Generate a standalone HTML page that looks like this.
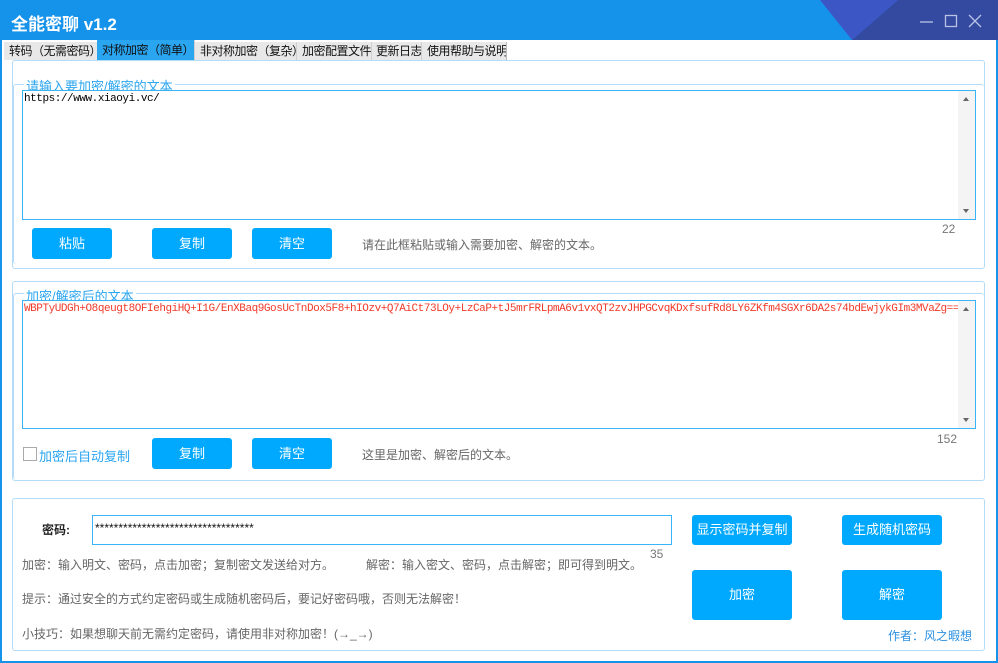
<!DOCTYPE html>
<html><head><meta charset="utf-8"><style>
*{margin:0;padding:0;box-sizing:border-box}
body{width:998px;height:663px;overflow:hidden;background:#fff;font-family:"Liberation Sans","Noto Sans CJK SC",sans-serif;position:relative}
.a{position:absolute;white-space:nowrap}
.title{left:0;top:0;width:998px;height:40px;background:#1592ea;overflow:hidden}
.title .t{left:11px;top:10px;color:#fff;font-size:17px;font-weight:bold}
.frame{left:0;top:40px;width:998px;height:623px;border:2px solid #1592ea;border-top:none}
.tabs{left:2px;top:40px;width:994px;height:20px;background:#fff}
.tab{position:absolute;top:2px;height:18px;background:#e8e8e8;font-size:12px;color:#111;line-height:18px;padding-left:5px;border-right:1px solid #d0d0d0;white-space:nowrap;overflow:hidden;letter-spacing:-0.5px}
.tab.sel{background:#2aa5f0;top:0;height:20px;line-height:21px}
.panel{border:1px solid #b4dcf8;border-radius:3px}
.grp{border:1px solid #b4dcf8;border-radius:3px}
.legend{background:#fff;color:#2aa5f0;font-size:13px;padding:0 2px}
.ta{border:1px solid #3ab4f5;background:#fff;overflow:hidden}
.sb{position:absolute;right:0;top:0;width:17px;bottom:0;background:#f4f4f4}
.btn{position:absolute;background:#00a8fe;color:#fff;font-size:13px;text-align:center;border-radius:3px}
.hint{color:#666;font-size:12px}
.mono{font-family:"Liberation Mono","DejaVu Sans Mono",monospace;font-size:11px;letter-spacing:-0.45px}
</style></head><body>
<div class="a title">
<svg class="a" style="left:0;top:0" width="998" height="40"><polygon points="820,0 898,0 852,40" fill="#3d56c6"/><polygon points="898,0 998,0 998,40 852,40" fill="#3449a0"/>
<line x1="920" y1="22" x2="933" y2="22" stroke="#b9c3e6" stroke-width="1.3"/>
<rect x="945.5" y="15.5" width="11" height="11" fill="none" stroke="#b9c3e6" stroke-width="1.3"/>
<path d="M969 15 L981 27 M981 15 L969 27" stroke="#b9c3e6" stroke-width="1.3"/></svg>
<div class="a t">全能密聊 v1.2</div>
</div>
<div class="a frame"></div>
<div class="a tabs">
<div class="tab" style="left:2px;width:94px">转码（无需密码）</div>
<div class="tab sel" style="left:95px;width:98px">对称加密（简单）</div>
<div class="tab" style="left:193px;width:102px">非对称加密（复杂）</div>
<div class="tab" style="left:295px;width:75px">加密配置文件</div>
<div class="tab" style="left:370px;width:50px;padding-left:4px">更新日志</div>
<div class="tab" style="left:420px;width:85px;border-right:1px solid #bbb">使用帮助与说明</div>
</div>
<!-- panel 1 -->
<div class="a panel" style="left:12px;top:60px;width:973px;height:209px"></div>
<div class="a grp" style="left:13px;top:84px;width:971px;height:180px;border-bottom:none;border-right:none"></div>
<div class="a legend" style="left:24px;top:76px">请输入要加密/解密的文本</div>
<div class="a ta" style="left:22px;top:90px;width:954px;height:130px">
<div class="a mono" style="left:1px;top:2px">https://www.xiaoyi.vc/</div>
<div class="sb"><div class="a" style="left:5px;top:6px;width:0;height:0;border:3.5px solid transparent;border-bottom:4px solid #666;border-top:none"></div><div class="a" style="left:5px;bottom:6px;width:0;height:0;border:3.5px solid transparent;border-top:4px solid #666;border-bottom:none"></div></div>
</div>
<div class="a hint" style="left:942px;top:222px;font-size:12px;color:#777">22</div>
<div class="btn" style="left:32px;top:228px;width:80px;height:31px;line-height:31px">粘贴</div>
<div class="btn" style="left:152px;top:228px;width:80px;height:31px;line-height:31px">复制</div>
<div class="btn" style="left:252px;top:228px;width:80px;height:31px;line-height:31px">清空</div>
<div class="a hint" style="left:362px;top:236px">请在此框粘贴或输入需要加密、解密的文本。</div>
<!-- panel 2 -->
<div class="a panel" style="left:12px;top:281px;width:973px;height:200px"></div>
<div class="a grp" style="left:13px;top:293px;width:971px;height:186px;border-bottom:none;border-right:none"></div>
<div class="a legend" style="left:24px;top:286px">加密/解密后的文本</div>
<div class="a ta" style="left:22px;top:300px;width:954px;height:129px">
<div class="a mono" style="left:1px;top:2px;color:#f03a2a">WBPTyUDGh+O8qeugt8OFIehgiHQ+I1G/EnXBaq9GosUcTnDox5F8+hIOzv+Q7AiCt73LOy+LzCaP+tJ5mrFRLpmA6v1vxQT2zvJHPGCvqKDxfsufRd8LY6ZKfm4SGXr6DA2s74bdEwjykGIm3MVaZg==</div>
<div class="sb"><div class="a" style="left:5px;top:6px;width:0;height:0;border:3.5px solid transparent;border-bottom:4px solid #666;border-top:none"></div><div class="a" style="left:5px;bottom:6px;width:0;height:0;border:3.5px solid transparent;border-top:4px solid #666;border-bottom:none"></div></div>
</div>
<div class="a hint" style="left:937px;top:432px;color:#777">152</div>
<div class="a" style="left:23px;top:447px;width:14px;height:14px;border:1px solid #aaa;background:#fff"></div>
<div class="a" style="left:39px;top:446px;font-size:13px;color:#2aa5f0">加密后自动复制</div>
<div class="btn" style="left:152px;top:438px;width:80px;height:31px;line-height:31px">复制</div>
<div class="btn" style="left:252px;top:438px;width:80px;height:31px;line-height:31px">清空</div>
<div class="a hint" style="left:362px;top:446px">这里是加密、解密后的文本。</div>
<!-- panel 3 -->
<div class="a panel" style="left:12px;top:498px;width:973px;height:153px"></div>
<div class="a" style="left:42px;top:521px;font-size:12px;font-weight:bold;color:#222">密码:</div>
<div class="a" style="left:92px;top:515px;width:580px;height:30px;border:1px solid #3ab4f5"><div class="a" style="left:2px;top:5px;font-size:12px;color:#111">**********************************</div></div>
<div class="a hint" style="left:650px;top:547px;color:#777">35</div>
<div class="btn" style="left:692px;top:515px;width:100px;height:30px;line-height:30px">显示密码并复制</div>
<div class="btn" style="left:842px;top:515px;width:100px;height:30px;line-height:30px">生成随机密码</div>
<div class="btn" style="left:692px;top:570px;width:100px;height:50px;line-height:50px">加密</div>
<div class="btn" style="left:842px;top:570px;width:100px;height:50px;line-height:50px">解密</div>
<div class="a hint" style="left:22px;top:556px">加密：输入明文、密码，点击加密；复制密文发送给对方。</div>
<div class="a hint" style="left:366px;top:556px">解密：输入密文、密码，点击解密；即可得到明文。</div>
<div class="a hint" style="left:22px;top:590px">提示：通过安全的方式约定密码或生成随机密码后，要记好密码哦，否则无法解密！</div>
<div class="a hint" style="left:22px;top:625px">小技巧：如果想聊天前无需约定密码，请使用非对称加密！(→_→)</div>
<div class="a" style="left:888px;top:627px;font-size:12px;color:#2a8fe0">作者：风之暇想</div>
</body></html>
